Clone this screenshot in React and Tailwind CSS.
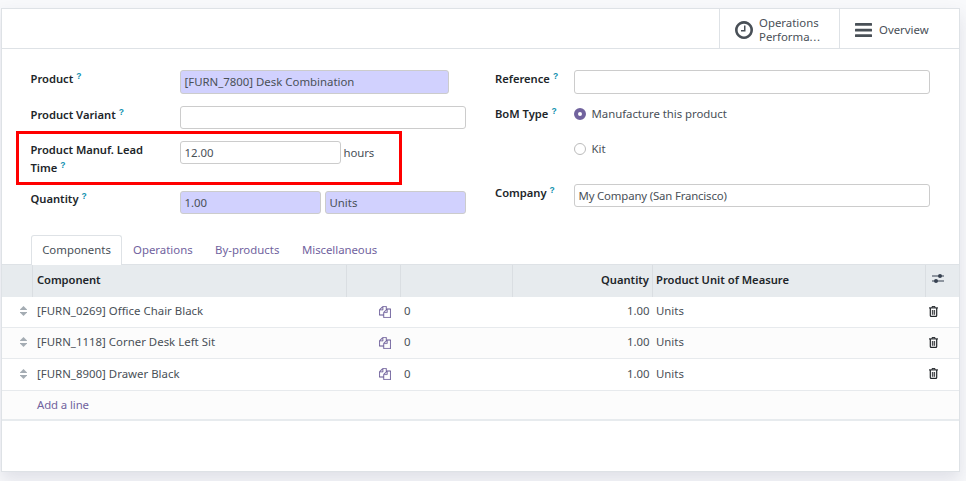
import React from "react";

const ROWS = [
  { name: "[FURN_0269] Office Chair Black", h: "h-[31px]", bg: "bg-white" },
  { name: "[FURN_1118] Corner Desk Left Sit", h: "h-[31px]", bg: "bg-[#fcfcfc]" },
  { name: "[FURN_8900] Drawer Black", h: "h-[32px]", bg: "bg-white" },
];

const COLS = "grid grid-cols-[31px_314px_54px_112px_140px_273px_33px]";

function ClockIcon() {
  return (
    <svg className="h-[18px] w-[18px] shrink-0" viewBox="128 128 1536 1536" fill="#495057">
      <path d="M1024 544v448q0 14-9 23t-23 9h-320q-14 0-23-9t-9-23v-64q0-14 9-23t23-9h224v-352q0-14 9-23t23-9h64q14 0 23 9t9 23zm416 352q0-148-73-273t-198-198-273-73-273 73-198 198-73 273 73 273 198 198 273 73 273-73 198-198 73-273zm224 0q0 209-103 385.5t-279.5 279.5-385.5 103-385.5-103-279.5-279.5-103-385.5 103-385.5 279.5-279.5 385.5-103 385.5 103 279.5 279.5 103 385.5z" />
    </svg>
  );
}

function BarsIcon() {
  return (
    <svg className="h-[14px] w-[17px] shrink-0" viewBox="0 0 17 14" fill="#495057">
      <rect y="0" width="17" height="2.7" rx="0.5" />
      <rect y="5.7" width="17" height="2.7" rx="0.5" />
      <rect y="11.3" width="17" height="2.7" rx="0.5" />
    </svg>
  );
}

function CopyIcon() {
  return (
    <svg className="h-[12px] w-[12px]" viewBox="0 0 1792 1792" fill="#71639e" stroke="#71639e" strokeWidth="20">
      <path d="M1696 384q40 0 68 28t28 68v1216q0 40-28 68t-68 28h-960q-40 0-68-28t-28-68v-288h-544q-40 0-68-28t-28-68v-672q0-40 20-88t48-76l408-408q28-28 76-48t88-20h416q40 0 68 28t28 68v328q68-40 128-40h416zm-544 213l-299 299h299v-299zm-640-384l-299 299h299v-299zm196 647l316-316v-416h-384v416q0 40-28 68t-68 28h-416v640h512v-256q0-40 20-88t48-76zm956 804v-1152h-384v416q0 40-28 68t-68 28h-416v640h896z" />
    </svg>
  );
}

function SortIcon() {
  return (
    <svg className="h-[10px] w-[7px]" viewBox="0 0 7 10" fill="#a4acb3">
      <path d="M3.5 0 7 3.4V4H0V3.4Z" />
      <path d="M3.5 10 7 6.6V6H0V6.6Z" />
    </svg>
  );
}

function TrashIcon() {
  return (
    <svg className="h-[11px] w-[9px]" viewBox="0 0 9 11" fill="none" stroke="#212529">
      <path d="M0 1.9H9" strokeWidth="1.1" />
      <path d="M3 1.8V.6H6V1.8" />
      <path d="M1.3 2V9.4Q1.3 10.4 2.2 10.4H6.8Q7.7 10.4 7.7 9.4V2" strokeWidth="1.2" />
      <path d="M3.4 4V8.8M5.6 4V8.8" strokeWidth="0.9" />
      <path d="M4.5 4V8.8" strokeWidth="0.7" stroke="#888" />
    </svg>
  );
}

function SlidersIcon() {
  return (
    <svg className="h-[11px] w-[12px]" viewBox="0 0 12 11" fill="#374151">
      <path d="M0 2.6H12V3.6H0ZM0 7.4H12V8.4H0Z" />
      <circle cx="8" cy="3.1" r="2" />
      <circle cx="4" cy="7.9" r="2" />
    </svg>
  );
}

function Label({ children, className = "" }) {
  return (
    <div className={"text-[11.2px] leading-[18px] font-semibold text-[#212529] " + className}>
      {children}
      <sup className="relative top-[-4px] ml-[3px] align-baseline font-['Liberation_Sans',sans-serif] text-[8.5px] leading-none font-bold text-[#0d8fae]">?</sup>
    </div>
  );
}

function Field({ children, className = "" }) {
  return (
    <div className={"flex items-center rounded-[3px] border border-[#ccc] pl-[3.5px] " + className}>{children}</div>
  );
}

export default function App() {
  return (
    <div className="h-[481px] w-[966px] overflow-hidden bg-[#f8f9fb] pt-2 pl-px font-['Noto_Sans','Open_Sans',sans-serif] text-[11.4px] leading-[14px] text-[#495057]">
      <div className="flex h-[464px] w-[959px] flex-col border border-[#dee2e6] bg-white shadow-[0_8px_16px_rgba(60,60,100,0.13)]">
        <div className="flex h-[40px] shrink-0 justify-end border-b border-[#dee2e6]">
          <div className="flex w-[120px] items-center gap-[6px] border-l border-[#dee2e6] pl-[15px] pt-[2px]">
            <ClockIcon />
            <div className="pt-px leading-[14px]">
              Operations
              <br />
              Performa<span className="tracking-[0.7px]">...</span>
            </div>
          </div>
          <div className="flex w-[120px] items-center gap-[7px] border-l border-[#dee2e6] pl-[15px] pt-[3px]">
            <BarsIcon />
            <span>Overview</span>
          </div>
        </div>

        <div className="flex h-[186px] shrink-0">
          <div className="w-[478px] pl-[14px]">
            <div className="flex h-[57px] pt-[21px]">
              <Label className="ml-[14.5px] w-[149.5px]">Product</Label>
              <Field className="h-[24px] w-[269px] bg-[#d1d1fe]">[FURN_7800] Desk Combination</Field>
            </div>
            <div className="flex h-[25px]">
              <Label className="ml-[14.5px] w-[149.5px]">Product Variant</Label>
              <Field className="h-[23px] w-[286px]" />
            </div>
            <div className="flex h-[54px] w-[386px] border-[3px] border-[#f00] pt-[7px]">
              <Label className="ml-[11.5px] w-[149.5px] pr-6 tracking-[-0.03px]">
                Product Manuf. Lead Time
              </Label>
              <Field className="h-[23px] w-[161px]">12.00</Field>
              <span className="ml-[2.5px] pt-[5px] tracking-[-0.1px]">hours</span>
            </div>
            <div className="flex pt-[6px]">
              <Label className="ml-[14.5px] w-[149.5px] -mt-px">Quantity</Label>
              <Field className="h-[23px] w-[141px] bg-[#d1d1fe]">1.00</Field>
              <Field className="ml-1 h-[23px] w-[141px] bg-[#d1d1fe]">Units</Field>
            </div>
          </div>

          <div className="w-[479px] pl-[15px]">
            <div className="flex h-[56px] pt-[21px]">
              <Label className="w-[79px]">Reference</Label>
              <Field className="h-[24px] w-[356px]" />
            </div>
            <div className="flex h-[79px]">
              <Label className="w-[79px]">BoM Type</Label>
              <div className="flex flex-col gap-[21px] pt-[2px]">
                <div className="flex items-center gap-[5.5px]">
                  <span className="h-[12px] w-[12px] rounded-full border-[4px] border-[#71639e] bg-white" />
                  <span className="tracking-[-0.03px]">Manufacture this product</span>
                </div>
                <div className="flex items-center gap-[5.5px]">
                  <span className="h-[12px] w-[12px] rounded-full border border-[#bbb] bg-white" />
                  <span>Kit</span>
                </div>
              </div>
            </div>
            <div className="flex">
              <Label className="w-[79px]">Company</Label>
              <Field className="h-[23px] w-[356px] tracking-[-0.17px]">My Company (San Francisco)</Field>
            </div>
          </div>
        </div>

        <div className="flex h-[29px] shrink-0 pl-[29px]">
          <div className="relative h-[30px] w-[91px] rounded-t-[3px] border border-b-0 border-[#dee2e6] bg-white pt-[7px] text-center">Components</div>
          <div className="ml-[11px] w-[82px] pt-[8px] text-[#71639e]">Operations</div>
          <div className="w-[87px] pt-[8px] text-[#71639e]">By-products</div>
          <div className="pt-[8px] tracking-[-0.05px] text-[#71639e]">Miscellaneous</div>
        </div>

        <div className={COLS + " h-[33px] shrink-0 border-t border-[#dee2e6] bg-[#e7ebee] font-semibold text-[#212529] text-[11.2px] [&>div]:border-r [&>div]:border-[#dadee2] [&>div]:pt-[8px] [&>div:last-child]:border-r-0"}>
          <div />
          <div className="pl-[4px] tracking-[-0.06px]">Component</div>
          <div />
          <div />
          <div className="pr-[3px] text-right">Quantity</div>
          <div className="pl-[3px]">Product Unit of Measure</div>
          <div className="pl-[6px]"><SlidersIcon /></div>
        </div>

        {ROWS.map((r) => (
          <div key={r.name} className={COLS + " shrink-0 items-center border-b border-[#e7eaed] pb-[2px] " + r.h + " " + r.bg}>
            <div className="flex justify-end pr-[6px]"><SortIcon /></div>
            <div className="pl-[4px] tracking-[0.02px]">{r.name}</div>
            <div className="pl-[32px] pt-px"><CopyIcon /></div>
            <div className="pl-[3px]">0</div>
            <div className="pr-[3.5px] text-right">1.00</div>
            <div className="pl-[3px]">Units</div>
            <div className="pl-[3px]"><TrashIcon /></div>
          </div>
        ))}

        <div className="flex h-[30px] shrink-0 items-center border-b-2 border-[#e7ebee] bg-[#fcfcfc] pl-[35px] text-[#71639e] tracking-[-0.1px]">
          Add a line
        </div>
      </div>
    </div>
  );
}
